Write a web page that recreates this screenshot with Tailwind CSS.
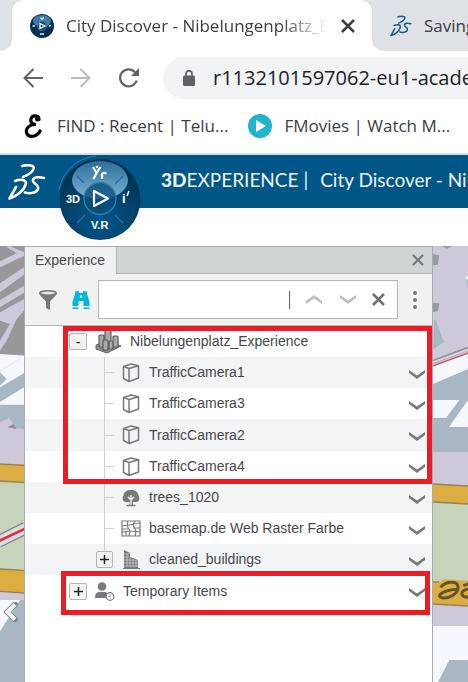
<!DOCTYPE html>
<html lang="en">
<head>
<meta charset="utf-8">
<title>City Discover - Nibelungenplatz_Experience</title>
<script src="https://cdn.jsdelivr.net/npm/@tailwindcss/browser@4"></script>
</head>
<body class="flex min-h-screen flex-col overflow-x-hidden bg-white font-['Open_Sans','Noto_Sans',sans-serif]">
<svg class="hidden">
  <symbol id="ds" viewBox="0 0 38 36"><path fill="none" stroke="currentColor" stroke-width="2.600" stroke-linecap="round" stroke-linejoin="round" d="M14 2C20 .5 27 1 25.500 5C24 8.500 19 11.500 15 13M7 17C14 14.500 19.500 16 17.500 21C15.500 27 8 32.500 1.500 34.500L8 23M36 14C30 12.500 24.500 13 25 17C25.500 20 31.500 21 30 25C28.500 29 22 30 17 28.500"/></symbol>
  <symbol id="chev" viewBox="0 0 16 9"><path fill="currentColor" d="M0 0L8 5.500L16 0V3L8 9L0 3Z"/></symbol>
  <symbol id="cube" viewBox="0 0 18 20"><path fill="none" stroke="#77797c" stroke-width="1.500" stroke-linejoin="round" d="M1.500 3.500L9 1L16.500 2.800V15L7 18.500L1.500 15.500ZM1.500 3.500L7 5.500L16.500 2.800M7 5.500V18.500"/></symbol>
</svg>

<header>
  <div class="flex h-[51px] bg-[#dee1e6]">
    <div class="w-3 bg-white"><div class="h-full rounded-br-xl bg-[#dee1e6]"></div></div>
    <div class="flex min-w-0 flex-1 items-center rounded-t-xl bg-white pr-4 pl-[18px]">
      <svg class="h-6 w-6 shrink-0" viewBox="0 0 24 24"><circle cx="12" cy="12" r="12" fill="#062f4f"/><ellipse cx="12" cy="7" rx="9" ry="6" fill="#3f7ea8"/><circle cx="12" cy="12" r="4.500" fill="#0b4670" stroke="#2f78a8"/><path d="M10 9.500L15 12L10 14.500Z" fill="none" stroke="#fff" stroke-width="1.300"/><path d="M2.500 12H5M19 12.500L20.500 11M10 20H14M10.500 4L12 5L14 3.500" stroke="#d6e6f0" stroke-width="1.600"/></svg>
      <span class="ml-3 flex-1 overflow-hidden text-[17px] whitespace-nowrap text-[#3c4043] [mask-image:linear-gradient(to_right,black_82%,transparent)]">City Discover - Nibelungenplatz_Experience</span>
      <button aria-label="Close tab" class="ml-3"><svg class="h-4 w-4" viewBox="0 0 16 16"><path d="M2 2L14 14M14 2L2 14" stroke="#3c4043" stroke-width="2.500"/></svg></button>
    </div>
    <div class="w-24 bg-white"><div class="flex h-full items-center gap-3 overflow-hidden rounded-bl-xl pl-[18px] bg-[#dee1e6]">
      <svg class="h-6 w-[22px] shrink-0 text-[#145c8e]"><use href="#ds"/></svg>
      <span class="min-w-0 overflow-hidden text-[17px] whitespace-nowrap text-[#3c4043]">Saving</span>
    </div></div>
  </div>
  <div class="flex h-[53px] items-center gap-7 pl-[23px]">
    <button aria-label="Back"><svg class="h-5 w-5" viewBox="0 0 20 20"><path d="M20 10H2M10.500 1L1.500 10L10.500 19" fill="none" stroke="#5f6368" stroke-width="2"/></svg></button>
    <button aria-label="Forward"><svg class="h-5 w-5" viewBox="0 0 20 20"><path d="M0 10H18M9.500 1L18.500 10L9.500 19" fill="none" stroke="#babcbe" stroke-width="2"/></svg></button>
    <button aria-label="Reload"><svg class="h-5 w-5" viewBox="0 0 20 20"><path d="M17.700 12.500A8.500 8.500 0 1 1 16 4.200" fill="none" stroke="#5f6368" stroke-width="2.200"/><path d="M20 0V8H12Z" fill="#5f6368"/></svg></button>
    <div class="-ml-1 flex h-[42px] min-w-0 flex-1 items-center overflow-hidden rounded-l-full bg-[#f1f3f4] pl-5">
      <svg class="h-4 w-3 shrink-0" viewBox="0 0 12 16"><rect y="5.500" width="12" height="10.500" rx="1.500" fill="#5f6368"/><path d="M3 6V3.800A3 3 0 0 1 9 3.800V6" fill="none" stroke="#5f6368" stroke-width="1.700"/></svg>
      <input aria-label="Address" value="r1132101597062-eu1-academy.3dexperience.3ds.com" class="ml-[18px] min-w-0 flex-1 bg-transparent text-[20px] text-[#202124] outline-none">
    </div>
  </div>
  <nav class="flex h-[49px] items-center pb-1.5 pl-6 text-[17px] whitespace-nowrap text-[#3c4043]">
    <a href="#" class="flex items-center"><svg class="h-6 w-[18px]" viewBox="0 0 18 24"><path d="M15 5.500C15 1 8 .5 7 5C6 8.500 9 10.500 12 10.500C6 10 1.500 14 2.500 18.500C4 24 13 23.500 16 17" fill="none" stroke="#000" stroke-width="3.200" stroke-linecap="round"/><circle cx="13.500" cy="5" r="2.500"/></svg><span class="ml-[15px]">FIND : Recent | Telu...</span></a>
    <a href="#" class="ml-5 flex items-center"><svg class="h-6 w-6" viewBox="0 0 24 24"><circle cx="12" cy="12" r="12" fill="#1fb5cd"/><path d="M8 6L18 12L8 18Z" fill="#fff"/></svg><span class="ml-3">FMovies | Watch M...</span></a>
  </nav>
</header>

<div class="relative z-10 mb-[38px] flex h-[55px] items-center border-t-2 border-[#dadce0] bg-[#005686] text-[19px] whitespace-nowrap text-[#edf4f8] font-[Lato,'Open_Sans',sans-serif]">
  <svg class="ml-2 h-9 w-[38px] shrink-0 text-white"><use href="#ds"/></svg>
  <button aria-label="Compass" class="ml-3 h-[86px] w-[84px] shrink-0 self-start">
    <svg class="h-[86px] w-[84px]" viewBox="0 0 84 86">
      <defs><radialGradient id="disc" cy=".75" r=".7"><stop stop-color="#00568a"/><stop offset=".6" stop-color="#00436c"/><stop offset="1" stop-color="#00304f"/></radialGradient><linearGradient id="gloss" x2="0" y2="1"><stop stop-color="#2b6d9b"/><stop offset="1" stop-color="#7eb4d5"/></linearGradient></defs>
      <path d="M1 35A41 41 0 0 1 38 1" fill="none" stroke="#2a7eac"/>
      <circle cx="42" cy="44.500" r="40.500" fill="url(#disc)"/>
      <ellipse cx="42" cy="25" rx="28" ry="19" fill="url(#gloss)"/>
      <path d="M19 21L26 28M65 21L57 29M19 68L27 60M65 68L57 60" stroke="#28709f" stroke-width="1.500"/>
      <circle cx="42" cy="43.500" r="16" fill="#0b4d7b" fill-opacity=".8" stroke="#2f82b5" stroke-width="1.300"/>
      <path d="M36 36V51L50 43.500Z" fill="none" stroke="#fff" stroke-width="2.200" stroke-linejoin="round"/>
      <path d="M35 12L38.500 18M42.500 12L38.500 18L35.500 24M44 18V24M44 20C44 18 47 17 48 19" fill="none" stroke="#fff" stroke-width="2.200"/><circle cx="39" cy="12" r="1.300" fill="#fff"/>
      <text x="8" y="48" font-family="Liberation Sans" font-size="11" font-weight="bold" fill="#fff">3D</text>
      <text x="64" y="48" font-family="Liberation Sans" font-size="13" font-weight="bold" fill="#fff">i</text><path d="M69 41L71 36" stroke="#fff" stroke-width="1.500"/>
      <text x="33" y="74" font-family="Liberation Sans" font-size="11" font-weight="bold" fill="#fff">V.R</text>
    </svg>
  </button>
  <span class="ml-[19px] pb-0.5"><b class="font-black">3D</b>EXPERIENCE |</span>
  <span class="ml-3 min-w-0 flex-1 overflow-hidden pb-0.5">City Discover - Nibelungenplatz</span>
</div>

<main class="flex flex-1 items-stretch bg-[#a9b6c4]">
  <div class="relative w-6 shrink-0 overflow-hidden">
    <svg class="h-[436px] w-6" viewBox="0 6 72 1308">
      <rect width="72" height="1314" fill="#a9b6c4"/>
      <rect width="72" height="332" fill="#98989b"/>
      <path fill="#cdc9da" d="M28 6L72 24V36L0 70V52L50 28L20 10ZM0 118L72 70V92L0 145ZM0 168L72 125V146L0 190ZM0 205L72 165V200L50 225L20 290L0 320V290L30 240L0 230Z"/>
      <path fill="#f6f8ff" d="M0 330L72 335V388L0 430ZM0 474L72 430V482H0Z"/>
      <path d="M0 382L62 342" stroke="#9aa7bb" stroke-width="2" stroke-dasharray="2 4"/>
      <path fill="#a9b6c4" d="M0 385L20 405L0 425Z"/>
      <path fill="#cdc9da" d="M0 535L27 522L48 552L72 555V665H0Z"/><path fill="#8f8f99" d="M22 550L40 540L50 555Z"/>
      <rect y="660" width="72" height="56" fill="#dcae42"/><path d="M0 660L72 664M0 711L72 715" stroke="#94835c" stroke-width="4"/>
      <path fill="#c5d4bb" d="M0 715L72 718V980H0Z"/>
      <path d="M-5 893L77 852" stroke="#83858b" stroke-width="38"/><path d="M-5 893L77 852" stroke="#dcdce2" stroke-width="30"/><path d="M-5 892L77 853" stroke="#d5343b" stroke-width="8"/>
      <path fill="#dcae42" d="M0 975L72 979V1047L0 1042Z"/><path d="M0 975L72 979M0 1042L72 1047" stroke="#94835c" stroke-width="4"/>
      <path fill="#cdc9da" d="M0 1045L72 1049V1068H0Z"/><path fill="#f6f8ff" d="M0 1068H60L0 1162Z"/>
    </svg>
    <button aria-label="Collapse panel" class="absolute top-[356px] left-0.5"><svg class="h-5 w-4" viewBox="0 0 16 20"><path d="M13 2.500L5.500 10L13 17.500" fill="none" stroke="#85888c" stroke-width="6" stroke-linecap="round"/><path d="M13 2.500L5.500 10L13 17.500" fill="none" stroke="#f2f2f2" stroke-width="4"/></svg></button>
  </div>

  <section class="min-w-0 flex-1 border-x border-t border-[#a9acae] bg-white text-[14px] text-[#46484b] font-['Liberation_Sans',Arial,sans-serif]">
    <div class="flex h-[27px] bg-[#d0d4d4]">
      <h2 class="flex w-[92px] items-center border-r border-[#b4b6ba] bg-[#f0f1f1] pl-[10px]">Experience</h2>
      <div class="flex flex-1 items-center justify-end border-b border-[#b4b6ba] pr-2"><button aria-label="Close panel"><svg class="h-3 w-3" viewBox="0 0 12 12"><path d="M1 1L11 11M11 1L1 11" stroke="#77797c" stroke-width="2.200"/></svg></button></div>
    </div>
    <div class="flex h-[52px] items-center border-b border-[#b4b6ba] bg-[#f1f1f1] pl-[14px]">
      <button aria-label="Filter"><svg class="h-5 w-[18px]" viewBox="0 0 18 20"><path d="M0 3C2 8 6 9 7 12V18L11 20V12C12 9 16 8 18 3Z" fill="#77797c"/><ellipse cx="9" cy="3" rx="8.200" ry="2.200" fill="#e8e8e8" stroke="#77797c" stroke-width="1.500"/></svg></button>
      <button aria-label="Search" class="ml-[15px]"><svg class="h-5 w-[18px]" viewBox="0 0 18 20"><path fill="#00b8de" d="M3 1.500L7 1V3H11V1L15 1.500V4L17.500 12V16H11.500V11H6.500V16H.5V12L3 4ZM.5 17.500H6.500V19H.5ZM11.500 17.500H17.500V19H11.500Z"/><path d="M9 5V8" stroke="#f1f1f1" stroke-width="1.500"/></svg></button>
      <div class="ml-2 flex h-[39px] min-w-0 flex-1 items-center border border-[#b4b6ba] bg-white pr-3">
        <input aria-label="Search the tree" class="h-full min-w-0 flex-1 bg-transparent px-2 outline-none">
        <span class="h-[18px] w-px bg-[#5d6670]"></span>
        <button aria-label="Previous match" class="ml-4"><svg class="h-[9px] w-4 rotate-180 text-[#bcbec0]"><use href="#chev"/></svg></button>
        <button aria-label="Next match" class="ml-[18px]"><svg class="h-[9px] w-4 text-[#bcbec0]"><use href="#chev"/></svg></button>
        <button aria-label="Clear" class="ml-4"><svg class="h-[13px] w-[13px]" viewBox="0 0 13 13"><path d="M1 1L12 12M12 1L1 12" stroke="#6e7073" stroke-width="2.500"/></svg></button>
      </div>
      <button aria-label="More" class="mx-[15px]"><svg class="h-5 w-1" viewBox="0 0 4 20"><g fill="#77797c"><circle cx="2" cy="3" r="2"/><circle cx="2" cy="10" r="2"/><circle cx="2" cy="17" r="2"/></g></svg></button>
    </div>

    <ul class="relative">
      <li class="flex h-[31px] items-center pl-11"><button aria-label="Collapse" class="h-[17px] w-[18px] rounded-xs border border-[#b4b6ba] bg-[#f3f3f3] leading-3 text-black">-</button>
        <svg class="ml-2 h-[26px] w-[27px]" viewBox="0 0 27 26"><path d="M1 16L14 12L26 17L12 24L1 20Z" fill="#8d8d8d" stroke="#666"/><g fill="#a9a9a9" stroke="#5c5c5c" stroke-width="1.200"><rect x="10" y="1" width="6" height="14" rx="1"/><rect x="4" y="6" width="5" height="12" rx="1"/><rect x="18" y="7" width="5" height="11" rx="1"/><rect x="8" y="11" width="5" height="10" rx="1"/><rect x="14" y="12" width="4" height="8" rx="1"/></g></svg>
        <span class="ml-2">Nibelungenplatz_Experience</span></li>
      <li class="flex h-[31px] items-center bg-[#f3f4f6] pr-[7px] pl-[79px]"><span class="h-full w-px bg-[#cfd1d4]"></span><span class="h-px w-[9px] bg-[#cfd1d4]"></span><svg class="ml-2 h-5 w-[18px]"><use href="#cube"/></svg><span class="ml-[9px] flex-1">TrafficCamera1</span><button aria-label="Menu" class="mt-[3px]"><svg class="h-[9px] w-4 text-[#77797c]"><use href="#chev"/></svg></button></li>
      <li class="flex h-[31px] items-center pr-[7px] pl-[79px]"><span class="h-full w-px bg-[#cfd1d4]"></span><span class="h-px w-[9px] bg-[#cfd1d4]"></span><svg class="ml-2 h-5 w-[18px]"><use href="#cube"/></svg><span class="ml-[9px] flex-1">TrafficCamera3</span><button aria-label="Menu" class="mt-[3px]"><svg class="h-[9px] w-4 text-[#77797c]"><use href="#chev"/></svg></button></li>
      <li class="flex h-8 items-center bg-[#f3f4f6] pr-[7px] pl-[79px]"><span class="h-full w-px bg-[#cfd1d4]"></span><span class="h-px w-[9px] bg-[#cfd1d4]"></span><svg class="ml-2 h-5 w-[18px]"><use href="#cube"/></svg><span class="ml-[9px] flex-1">TrafficCamera2</span><button aria-label="Menu" class="mt-[3px]"><svg class="h-[9px] w-4 text-[#77797c]"><use href="#chev"/></svg></button></li>
      <li class="flex h-[31px] items-center pr-[7px] pl-[79px]"><span class="h-full w-px bg-[#cfd1d4]"></span><span class="h-px w-[9px] bg-[#cfd1d4]"></span><svg class="ml-2 h-5 w-[18px]"><use href="#cube"/></svg><span class="ml-[9px] flex-1">TrafficCamera4</span><button aria-label="Menu" class="mt-[3px]"><svg class="h-[9px] w-4 text-[#77797c]"><use href="#chev"/></svg></button></li>
      <li class="flex h-[31px] items-center bg-[#f3f4f6] pr-[7px] pl-[79px]"><span class="h-full w-px bg-[#cfd1d4]"></span><span class="h-px w-[9px] bg-[#cfd1d4]"></span><svg class="ml-2 h-[18px] w-[18px]" viewBox="0 0 18 18"><path d="M4 13C0 13 0 8 1.500 6.500C1.500 3 5 1 9 1S16.500 3 16.500 6.500C18 8 18 13 14 13H11V16L13 17H5L7.500 16V13Z" fill="#77797c"/><path d="M9 6V16M6 8L9 11L12 8" stroke="#f3f4f6" stroke-width="1.400" fill="none"/><path d="M4.500 16.500H13.500" stroke="#77797c" stroke-width="1.500"/></svg><span class="ml-[9px] flex-1">trees_1020</span><button aria-label="Menu" class="mt-[3px]"><svg class="h-[9px] w-4 text-[#77797c]"><use href="#chev"/></svg></button></li>
      <li class="flex h-[31px] items-center pr-[7px] pl-[79px]"><span class="h-full w-px bg-[#cfd1d4]"></span><span class="h-px w-[9px] bg-[#cfd1d4]"></span><svg class="ml-[7px] h-[17px] w-5" viewBox="0 0 20 17"><path d="M1 1H19V16H1ZM1 6L8 5L19 3M1 12L9 11L19 12M7 1L6 6L9 11L8 16M14 1L12 4.500L15 11.500L14 16M12 8H19M1 9H7M5 12V16" fill="none" stroke="#77797c" stroke-width="1.200"/></svg><span class="ml-2 flex-1">basemap.de Web Raster Farbe</span><button aria-label="Menu" class="mt-[3px]"><svg class="h-[9px] w-4 text-[#77797c]"><use href="#chev"/></svg></button></li>
      <li class="flex h-[31px] items-center bg-[#f3f4f6] pr-[7px] pl-[71px]"><span class="flex h-full w-[17px] flex-col items-center"><span class="h-[7px] w-px bg-[#cfd1d4]"></span><button aria-label="Expand" class="flex h-[17px] w-[17px] items-center justify-center rounded-xs border border-[#b4b6ba] bg-[#f3f3f3]"><svg class="h-[9px] w-[9px]" viewBox="0 0 9 9"><path d="M0 4.500H9M4.500 0V9" stroke="#222" stroke-width="1.500"/></svg></button></span>
        <svg class="ml-[10px] h-[19px] w-[17px]" viewBox="0 0 17 19"><path d="M1 0L7 3V7L15 10V18H17V19H0V18H1Z" fill="#77797c"/><path d="M1 4H7M1 7H7M1 10H15M1 13H15M1 16H15M4 3V17M7 8V17M10 9V17M13 10V17" stroke="#dedfe1" stroke-width=".6"/></svg><span class="ml-[9px] flex-1">cleaned_buildings</span><button aria-label="Menu" class="mt-[3px]"><svg class="h-[9px] w-4 text-[#77797c]"><use href="#chev"/></svg></button></li>
      <li class="flex h-8 items-center pr-[7px] pl-11"><button aria-label="Expand" class="flex h-[17px] w-[18px] items-center justify-center rounded-xs border border-[#b4b6ba] bg-[#f3f3f3]"><svg class="h-[9px] w-[9px]" viewBox="0 0 9 9"><path d="M0 4.500H9M4.500 0V9" stroke="#222" stroke-width="1.500"/></svg></button>
        <svg class="ml-2 h-[19px] w-5" viewBox="0 0 20 19"><circle cx="7" cy="4.500" r="4.300" fill="#77797c"/><path d="M0 16C0 11 2 10 5 10H9C11 10 12 10.500 13 11.500L10.500 16Z" fill="#77797c"/><circle cx="15" cy="14.500" r="3.800" fill="#fff" stroke="#77797c" stroke-width="1.200"/><path d="M15 12.500V14.500H13.500" fill="none" stroke="#77797c"/></svg><span class="ml-2 flex-1">Temporary Items</span><button aria-label="Menu" class="mt-[3px]"><svg class="h-[9px] w-4 text-[#77797c]"><use href="#chev"/></svg></button></li>
      <li aria-hidden="true" class="pointer-events-none absolute top-0 right-0 left-[38px] h-[158px] border-5 border-[#ed1c24]"></li>
      <li aria-hidden="true" class="pointer-events-none absolute top-[245px] right-0.5 left-9 h-11 border-5 border-[#ed1c24]"></li>
    </ul>
  </section>

  <div class="w-[35px] shrink-0 overflow-hidden">
    <svg class="h-[436px] w-[35px]" viewBox="99 6 105 1308">
      <rect x="99" width="105" height="1314" fill="#a9b6c4"/>
      <path fill="#cdc9da" d="M99 6H204V330L99 366Z"/>
      <path fill="#9a9aa6" d="M99 30L117 34L114 62L99 64ZM99 176L118 178L114 202L99 204ZM125 6H160L140 14Z"/>
      <path fill="#a9b6c4" d="M102 225L108 230L132 294L99 316ZM196 102L204 100V135Z"/><path fill="#fff" d="M196 98H204V106H198Z"/>
      <path d="M99 354L204 314" stroke="#8f8f93" stroke-width="12"/><path d="M99 355L204 316" stroke="#d7d7da" stroke-width="6"/>
      <path fill="#f6f8ff" d="M99 366L204 328V375L99 420ZM99 468H178L138 522H99ZM204 468V549H147Z"/><path d="M99 366L204 327" stroke="#d0424b" stroke-width="4"/>
      <rect x="99" y="624" width="105" height="100" fill="#cdc9da"/>
      <path fill="#c5d4bb" d="M99 770H204V1020H99Z"/>
      <path fill="#dcae42" d="M99 720L204 726V780L99 774Z"/><path d="M99 720L204 726M99 774L204 780" stroke="#94835c" stroke-width="4"/>
      <rect x="99" y="1070" width="105" height="76" fill="#cdc9da"/>
      <path fill="#dcae42" d="M99 1014L118 1016L130 1006L204 1010V1086L99 1080Z"/><path d="M99 1014H118M99 1080L204 1086" stroke="#94835c" stroke-width="4"/>
      <path d="M122 1030C135 1012 172 1008 174 1028C176 1048 150 1064 128 1062C108 1060 120 1040 170 1036M190 1025L210 1018M210 1034C178 1036 176 1062 210 1060" fill="none" stroke="#64532c" stroke-width="9"/>
      <path fill="#f6f8ff" d="M99 1146H204V1248H148L114 1314H99Z"/>
    </svg>
  </div>
</main>
</body>
</html>
